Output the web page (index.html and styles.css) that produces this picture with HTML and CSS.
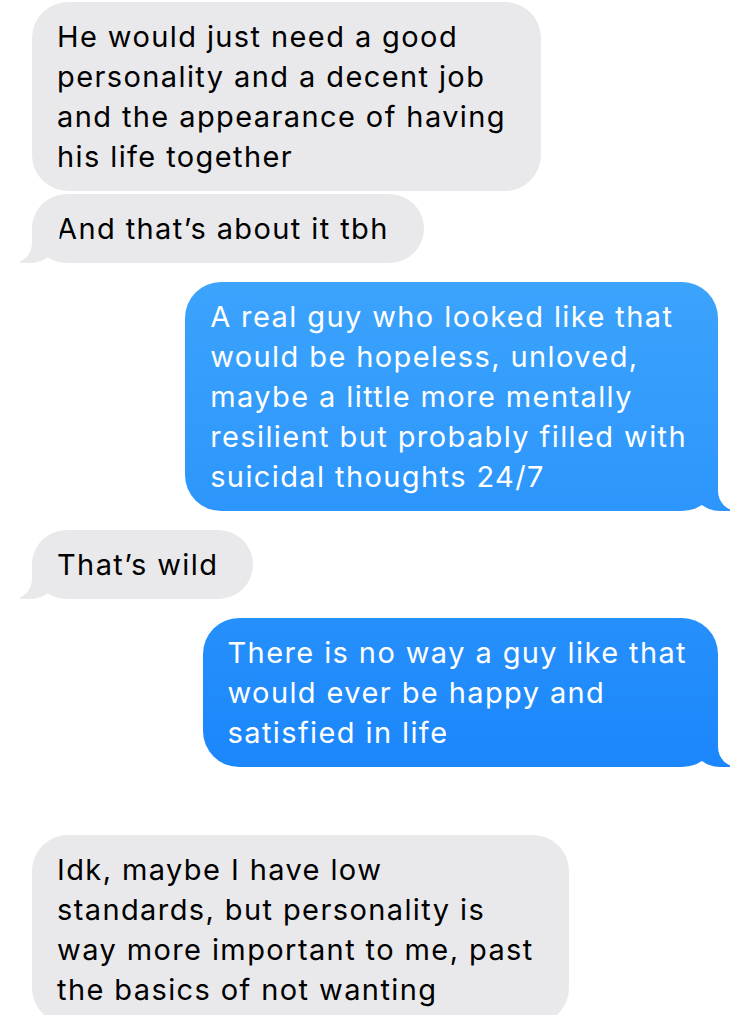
FILE: index.html
```html
<!DOCTYPE html>
<html lang="en">
<head>
    <meta charset="UTF-8">
    <meta name="viewport" content="width=device-width, initial-scale=1.0">
    <title>Messages</title>
    <link rel="stylesheet" href="styles.css">
</head>
<body>
    <div class="thread">
        <!-- their messages sit on the left, mine on the right -->
        <div class="msg them">He would just need a good<br>personality and a decent job<br>and the appearance of having<br>his life together</div>
        <div class="msg them tail same">And that&rsquo;s about it tbh</div>

        <div class="msg me tail">A real guy who looked like that<br>would be hopeless, unloved,<br>maybe a little more mentally<br>resilient but probably filled with<br>suicidal thoughts 24/7</div>

        <div class="msg them tail">That&rsquo;s wild</div>

        <div class="msg me tail">There is no way a guy like that<br>would ever be happy and<br>satisfied in life</div>

        <div class="msg them later">Idk, maybe I have low<br>standards, but personality is<br>way more important to me, past<br>the basics of not wanting</div>
    </div>
</body>
</html>
```

FILE: styles.css
```css
body, html {
    margin: 0;
    padding: 0;
    background-color: white;
}
.thread {
    display: flex;
    flex-direction: column;
    padding: 2px 32px 40px;
    font-family: "Inter", "Liberation Sans", sans-serif;
    font-size: 29px;
    line-height: 40px;
    letter-spacing: 1.4px;
}
.msg {
    position: relative;
    width: fit-content;
    padding: 15px 35px 14px 25px;
    border-radius: 36px;
    margin-top: 19px;
}
.msg:first-child {
    margin-top: 0;
}
.msg.same {
    margin-top: 3px;
}
.msg.later {
    margin-top: 68px;
}

/* grey bubbles from the other person */
.them {
    align-self: flex-start;
    background-color: #e9e9eb;
    color: black;
}

/* blue bubbles, gradient is pinned to the screen like iMessage */
.me {
    align-self: flex-end;
    padding-right: 31px;
    color: white;
    background: linear-gradient(to bottom, #56b9fd 0%, #3aa2fc 30%, #1c87fb 75%, #0f7afb 100%) fixed;
}

/* bubble tails */
.tail::before,
.tail::after {
    content: "";
    position: absolute;
    bottom: 0;
    height: 40px;
}
.them.tail::before {
    left: -12px;
    width: 40px;
    background-color: #e9e9eb;
    border-bottom-right-radius: 30px;
}
.them.tail::after {
    left: -52px;
    width: 52px;
    background-color: white;
    border-bottom-right-radius: 20px;
}
.me.tail::before {
    right: -12px;
    width: 40px;
    background: linear-gradient(to bottom, #56b9fd 0%, #3aa2fc 30%, #1c87fb 75%, #0f7afb 100%) fixed;
    border-bottom-left-radius: 30px;
}
.me.tail::after {
    right: -52px;
    width: 52px;
    background-color: white;
    border-bottom-left-radius: 20px;
}
```
